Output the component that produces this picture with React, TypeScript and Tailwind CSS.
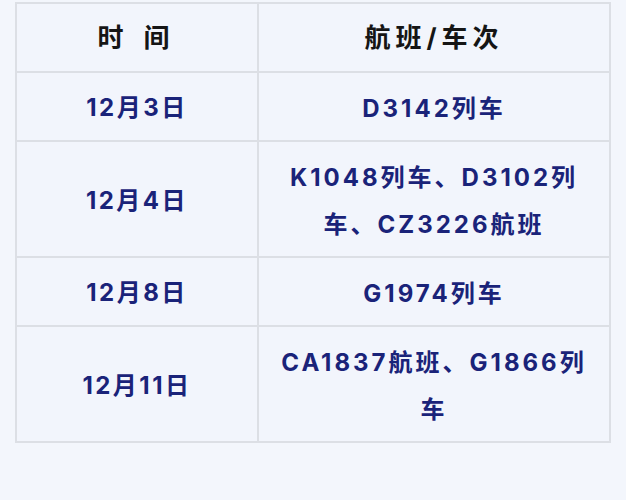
const rows: { date: string; trips: string }[] = [
  { date: "12月3日", trips: "D3142列车" },
  { date: "12月4日", trips: "K1048列车、D3102列车、CZ3226航班" },
  { date: "12月8日", trips: "G1974列车" },
  { date: "12月11日", trips: "CA1837航班、G1866列车" },
];

export default function App() {
  return (
    <div
      className="h-[500px] w-[626px] bg-[#f3f6fc] pt-[2px] pl-[15px]"
      style={{ fontFamily: 'Inter, "Noto Sans CJK SC", sans-serif' }}
    >
      <table className="w-[596px] table-fixed border-collapse bg-[#f2f5fc]">
        <colgroup>
          <col className="w-[242px]" />
          <col />
        </colgroup>
        <thead>
          <tr>
            <th className="h-[69px] border-2 border-[#dcdfe5] px-4 text-center text-[26px] font-bold tracking-[7px] text-[#151515]">
              时 间
            </th>
            <th className="h-[69px] border-2 border-[#dcdfe5] px-4 text-center text-[26px] font-bold tracking-[5px] text-[#151515]">
              航班/车次
            </th>
          </tr>
        </thead>
        <tbody>
          {rows.map((r) => (
            <tr key={r.date}>
              <td className="border-2 border-[#dcdfe5] px-4 pt-[11px] pb-[9px] text-center text-[24px] leading-[47px] font-bold tracking-[2.5px] text-[#1a2379]">
                {r.date}
              </td>
              <td className="border-2 border-[#dcdfe5] px-4 pt-[12px] pb-[8px] text-center text-[24px] leading-[47px] font-bold tracking-[3px] text-[#1a2379]">
                {r.trips}
              </td>
            </tr>
          ))}
        </tbody>
      </table>
    </div>
  );
}
